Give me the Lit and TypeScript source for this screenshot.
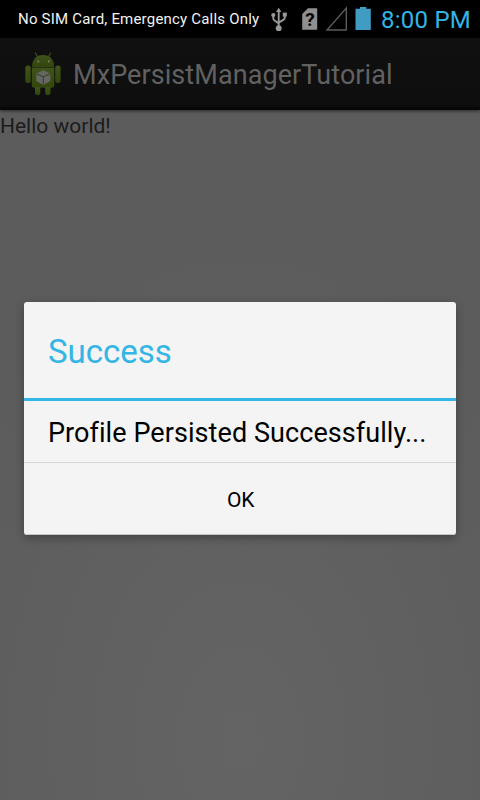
import { LitElement, html, css } from "lit";
import { customElement } from "lit/decorators.js";

@customElement("status-bar")
class StatusBar extends LitElement {
  static styles = css`
    :host { display: flex; height: 38px; background: #000; box-sizing: border-box; padding-left: 18px; white-space: nowrap; }
    .carrier { width: 251px; font-size: 15px; line-height: 38px; color: #f2f2f2; letter-spacing: 0.2px; }
    .icons { width: 104px; height: 38px; flex: none; }
    .mark { font: bold 19px Roboto, sans-serif; fill: #000; }
    .clock { margin-left: 8px; font-size: 24px; line-height: 40px; color: #33b5e5; letter-spacing: 0.25px; }
  `;
  render() {
    return html`
      <span class="carrier">No SIM Card, Emergency Calls Only</span>
      <svg class="icons" viewBox="269 0 104 38">
        <g fill="none" stroke="#999" stroke-width="1.9">
          <path d="M278.7 11V28M273.3 15v3.5q0 1 1 1.7l4.4 3.3M284.7 14v4q0 1-1 1.6l-5 3"/>
        </g>
        <g fill="#999">
          <path d="M278.7 7.7l2.7 4.3h-5.4z"/>
          <circle cx="273.3" cy="15" r="2.1"/>
          <path d="M282.8 12.6h4v4h-4z"/>
          <circle cx="278.7" cy="28.2" r="2.9"/>
        </g>
        <path d="M308 8.3h9.2v21.4h-15V14z" fill="#909090"/>
        <text class="mark" x="309.9" y="26.2" text-anchor="middle">?</text>
        <path d="M346.3 8v22H327z" fill="none" stroke="#5c5c5c" stroke-width="1.4"/>
        <path d="M360 7h6.3v1.8h4.5V30h-15.3V8.8h4.5z" fill="#419cc3"/>
      </svg>
      <span class="clock">8:00 PM</span>
    `;
  }
}

@customElement("action-bar")
class ActionBar extends LitElement {
  static styles = css`
    :host { display: flex; align-items: center; height: 72px; box-sizing: border-box; padding-left: 19px;
      background: linear-gradient(#101010, #0e0e0e 68px, #080808 69px); box-shadow: 0 1px 3px rgba(0,0,0,.55); position: relative; }
    .logo { width: 48px; height: 48px; flex: none; }
    .title { margin-left: 6px; padding-top: 2px; font-size: 27px; line-height: 70px; color: #616161; white-space: nowrap; letter-spacing: 0.08px; }
  `;
  render() {
    return html`
      <svg class="logo" viewBox="19 50 48 48">
        <defs>
          <linearGradient id="g" x2="0" y2="1"><stop stop-color="#3f531a"/><stop offset="1" stop-color="#33460c"/></linearGradient>
        </defs>
        <path d="M35.3 53l2.5 4M50.7 53l-2.5 4" stroke="#3d5019" stroke-width="1.2" stroke-linecap="round"/>
        <g fill="url(#g)">
          <path d="M32 66.9Q32.5 55 43 55T54.2 66.9z"/>
          <path d="M31.8 67.5h22.5v18q0 2.3-2.3 2.3H34.1q-2.3 0-2.3-2.3z"/>
          <rect x="25.3" y="65.5" width="5.4" height="17.6" rx="2.5"/>
          <rect x="55.2" y="65.5" width="5.4" height="17.6" rx="2.5"/>
          <path d="M35 87h5.3v5.4a2.65 2.65 0 0 1-5.3 0zM45.2 87h5.3v5.4a2.65 2.65 0 0 1-5.3 0z"/>
        </g>
        <circle cx="38.3" cy="61.4" r="1.1" fill="#717565"/>
        <circle cx="48.8" cy="61.4" r="1.1" fill="#717565"/>
        <path d="M43.3 70.3l7 3.2v7.6l-7 3.8-7-3.8v-7.6z" fill="#656862"/>
        <path d="M36.5 73.8l6.8 3 6.8-3M43.3 76.8v7.7" fill="none" stroke="#3b4628" stroke-width="1.1"/>
      </svg>
      <span class="title">MxPersistManagerTutorial</span>
    `;
  }
}

@customElement("alert-dialog")
class AlertDialog extends LitElement {
  static styles = css`
    :host { display: block; width: 432px; height: 233px; background: #f4f4f4; border-radius: 3px; overflow: hidden;
      white-space: nowrap; box-shadow: 0 3px 10px rgba(0,0,0,.3), inset 0 -1px #c4c6c5; }
    .heading { height: 96px; padding-left: 24px; font-size: 33px; line-height: 99px; color: #33b5e5; border-bottom: 3px solid #33b5e5; }
    .message { height: 61px; padding-left: 24px; font-size: 27px; line-height: 65px; color: #000; border-bottom: 1px solid #d6d6d6; letter-spacing: 0.07px; }
    .button { display: block; width: 100%; height: 72px; border: 0; padding: 2px 0 0 1px; background: none; font: 21px Roboto, sans-serif; letter-spacing: -0.3px; color: #000; }
  `;
  render() {
    return html`
      <div class="heading"><span>Success</span></div>
      <div class="message"><span>Profile Persisted Successfully...</span></div>
      <button class="button">OK</button>
    `;
  }
}

@customElement("app-root")
class AppRoot extends LitElement {
  static styles = css`
    :host { display: flex; flex-direction: column; position: relative; height: 800px; width: 480px; overflow: hidden; font-family: Roboto, sans-serif; }
    .content { flex: 1; background: radial-gradient(ellipse 340px 510px at 240px 630px, #646464 0, #5c5c5c 100%); font-size: 21px; line-height: 33px; color: #1b1b1b; }
    .dialog { position: absolute; left: 24px; top: 302px; }
  `;
  render() {
    return html`
      <status-bar></status-bar>
      <action-bar></action-bar>
      <main class="content"><span>Hello world!</span></main>
      <alert-dialog class="dialog"></alert-dialog>
    `;
  }
}
